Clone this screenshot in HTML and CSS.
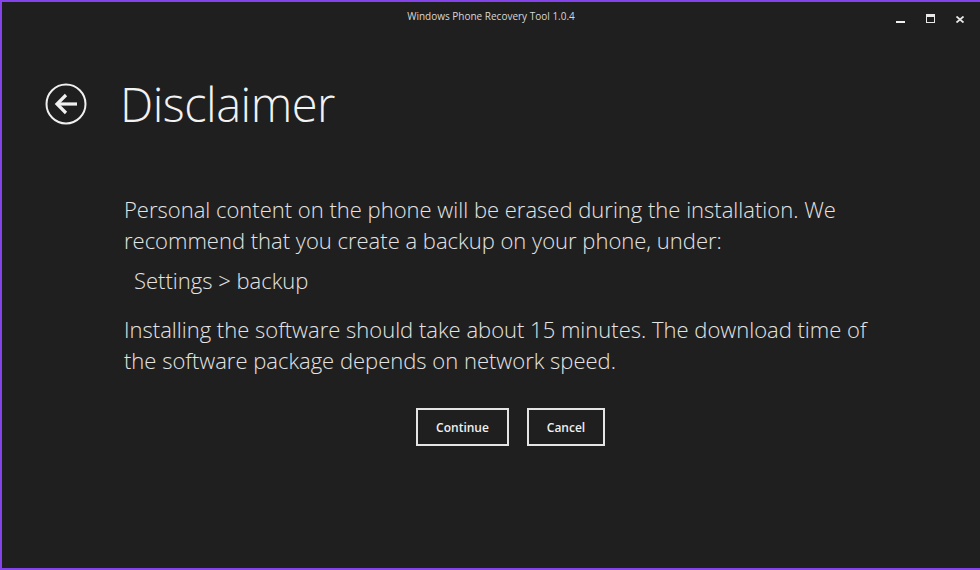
FILE: index.html
```html
<!DOCTYPE html>
<html lang="en">
<head>
<meta charset="UTF-8">
<title>Windows Phone Recovery Tool 1.0.4</title>
<link rel="stylesheet" href="styles.css">
</head>
<body>
<div class="window">
    <div class="titlebar">
        <span class="title">Windows Phone Recovery Tool 1.0.4</span>
        <div class="controls">
            <span class="ctl min"></span>
            <span class="ctl max"></span>
            <span class="ctl close">
                <svg width="8" height="7" viewBox="0 0 8 7"><path d="M0.5 0.5 L7.5 6.5 M7.5 0.5 L0.5 6.5" stroke="#e8e8e8" stroke-width="1.8"/></svg>
            </span>
        </div>
    </div>

    <div class="header">
        <svg class="back" width="42" height="42" viewBox="0 0 42 42">
            <circle cx="21" cy="21" r="19.5" fill="none" stroke="#f0f0f0" stroke-width="2"/>
            <path d="M13 21 H32" stroke="#f0f0f0" stroke-width="3.2"/>
            <path d="M21 12 L12 21 L21 30" fill="none" stroke="#f0f0f0" stroke-width="3.2"/>
        </svg>
        <h1>Disclaimer</h1>
    </div>

    <div class="content">
        <p>Personal content on the phone will be erased during the installation. We recommend that you create a backup on your phone, under:</p>
        <p class="path">Settings &gt; backup</p>
        <p>Installing the software should take about 15 minutes. The download time of the software package depends on network speed.</p>
        <div class="buttons">
            <button class="btn continue">Continue</button>
            <button class="btn cancel">Cancel</button>
        </div>
    </div>
</div>
</body>
</html>
```

FILE: styles.css
```css
html, body {
    margin: 0;
    padding: 0;
    background: #1f1f1f;
}
body {
    font-family: "Open Sans", "Noto Sans", sans-serif;
    color: #e4e4e4;
}
.window {
    width: 978px;
    height: 566px;
    border-left: 2px solid #8444ea;
    border-top: 2px solid #8444ea;
    border-bottom: 2px solid #8444ea;
    background: #1f1f1f;
    overflow: hidden;
}
.titlebar {
    height: 28px;
    display: flex;
    align-items: center;
    justify-content: center;
    position: relative;
}
.title {
    font-size: 10px;
    color: #d8d8d8;
}
.controls {
    position: absolute;
    right: 16px;
    top: 12px;
    display: flex;
    align-items: flex-end;
    gap: 21px;
}
.ctl {
    display: block;
}
.min {
    width: 9px;
    height: 2px;
    background: #f0f0f0;
    margin-bottom: 0;
}
.max {
    width: 7px;
    height: 5px;
    border: 1px solid #e8e8e8;
    border-top-width: 3px;
}
.close {
    width: 8px;
    height: 7px;
}
.close svg {
    display: block;
}
.header {
    display: flex;
    align-items: center;
    padding-left: 43px;
    margin-top: 49px;
}
.back {
    display: block;
}
h1 {
    margin: 0 0 0 33px;
    font-size: 47px;
    font-weight: 300;
    color: #f2f2f2;
    line-height: 50px;
    letter-spacing: -0.5px;
}
.content {
    width: 773px;
    padding-left: 122px;
    margin-top: 65px;
}
.content p {
    margin: 0;
    font-size: 22px;
    font-weight: 300;
    line-height: 31px;
}
.content p.path {
    padding-left: 10px;
    margin: 9px 0 18px;
}
.buttons {
    display: flex;
    justify-content: center;
    gap: 18px;
    margin-top: 32px;
}
.btn {
    height: 38px;
    background: #1f1f1f;
    border: 2px solid #e4e4e4;
    color: #f0f0f0;
    font-family: "Open Sans", "Noto Sans", sans-serif;
    font-weight: 600;
    font-size: 12px;
    padding: 0;
}
.continue {
    width: 93px;
}
.cancel {
    width: 78px;
}
```
